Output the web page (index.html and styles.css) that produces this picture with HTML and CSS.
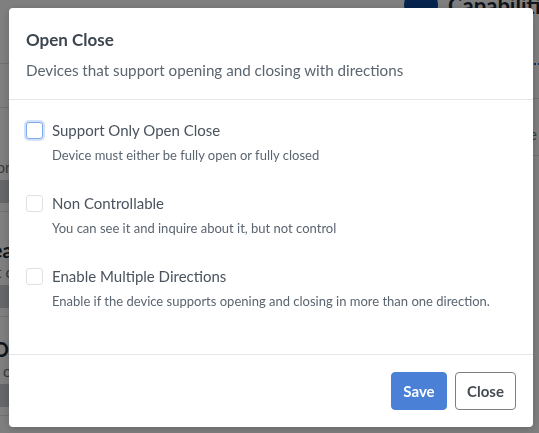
FILE: index.html
```html
<!DOCTYPE html>
<html lang="en">
<head>
<meta charset="utf-8">
<title>Open Close</title>
<link rel="stylesheet" href="styles.css">
</head>
<body>
<div class="page">
  <div class="topbar">
    <div class="avatar"></div>
    <div class="page-title">Capabilities</div>
  </div>
  <div class="columns">
    <div class="left-col">
      <div class="rule"></div>
      <div class="rule gap1"></div>
      <div class="cap first">
        <div class="cap-desc">Devices that can be set on or on</div>
        <div class="cap-bar"></div>
      </div>
      <div class="cap second">
        <div class="cap-title">Heat</div>
        <div class="cap-desc">Devices that ca</div>
        <div class="cap-bar"></div>
      </div>
      <div class="cap third">
        <div class="cap-title">Open Position On</div>
        <div class="cap-desc">Devices that can on</div>
        <div class="cap-bar"></div>
      </div>
    </div>
    <div class="right-col">
      <div class="dots"></div>
      <div class="rule r1"></div>
      <div class="r-text"><span>Close</span></div>
      <div class="rule"></div>
    </div>
  </div>
</div>

<div class="overlay">
  <div class="modal">
    <div class="modal-header">
      <h2 class="modal-title">Open Close</h2>
      <p class="modal-sub">Devices that support opening and closing with directions</p>
    </div>
    <div class="modal-body">
      <label class="option">
        <span class="box focused"></span>
        <span class="option-text">
          <span class="option-label">Support Only Open Close</span>
          <span class="option-desc">Device must either be fully open or fully closed</span>
        </span>
      </label>
      <label class="option">
        <span class="box"></span>
        <span class="option-text">
          <span class="option-label">Non Controllable</span>
          <span class="option-desc">You can see it and inquire about it, but not control</span>
        </span>
      </label>
      <label class="option">
        <span class="box"></span>
        <span class="option-text">
          <span class="option-label">Enable Multiple Directions</span>
          <span class="option-desc">Enable if the device supports opening and closing in more than one direction.</span>
        </span>
      </label>
    </div>
    <div class="modal-footer">
      <button class="btn btn-primary">Save</button>
      <button class="btn btn-outline">Close</button>
    </div>
  </div>
</div>
</body>
</html>
```
FILE: styles.css
```css
* { box-sizing: border-box; }
html, body { margin: 0; padding: 0; }
body {
  width: 539px;
  height: 433px;
  overflow: hidden;
  background: #ffffff;
  font-family: Lato, "Noto Sans", sans-serif;
  color: #3f4852;
}

/* background page */
.page { width: 539px; height: 433px; overflow: hidden; }
.topbar {
  display: flex;
  align-items: center;
  gap: 10px;
  margin-top: -12px;
  padding-left: 404px;
  height: 34px;
}
.avatar { width: 34px; height: 34px; border-radius: 50%; background: #0b4a9c; flex: none; }
.page-title { font-weight: 700; font-size: 22px; color: #1f2a36; white-space: nowrap; }
.columns { display: flex; justify-content: space-between; }
.left-col { width: 180px; margin-left: -160px; padding-top: 41px; }
.rule { height: 1px; background: #dfe3e8; }
.gap1 { margin-top: 43px; }
.cap { padding-top: 21px; border-bottom: 1px solid #dfe3e8; }
.cap.first { padding-top: 49px; }
.cap.second { padding-top: 26px; }
.cap.third { padding-top: 20px; }
.cap-title { font-weight: 700; font-size: 20px; line-height: 24px; text-align: right; color: #1f2a36; white-space: nowrap; }
.cap-desc { font-size: 15px; line-height: 20px; text-align: right; color: #6b7480; white-space: nowrap; }
.cap-bar { height: 23px; margin: 3px 0 8px; background: #c9cdd2; }
.right-col { width: 40px; margin-right: -20px; padding-top: 41px; padding-right: 22px; }
.right-col .rule { margin-right: -22px; }
.dots { height: 2px; border-top: 2px dotted #1c5db3; margin-right: -22px; }
.r1 { margin-top: 33px; }
.r-text {
  display: flex;
  justify-content: flex-end;
  font-size: 15px;
  line-height: 18px;
  color: #6b7480;
  padding: 26px 0 12px 0;
  white-space: nowrap;
}
.r-text span { flex: none; }

/* overlay + modal */
.overlay {
  position: fixed;
  inset: 0;
  background: rgba(0, 0, 0, 0.5);
}
.modal {
  position: absolute;
  left: 9px;
  top: 8px;
  width: 524px;
  background: #ffffff;
  border-radius: 4px;
  box-shadow: 0 2px 8px rgba(0,0,0,0.2);
}
.modal-header {
  padding: 20px 17px 17px;
  border-bottom: 1px solid #e3e6ea;
}
.modal-title {
  margin: 0;
  font-size: 17px;
  line-height: 24px;
  font-weight: 700;
  color: #3d4650;
}
.modal-sub {
  margin: 6px 0 0;
  font-size: 15.2px;
  line-height: 24px;
  color: #5b6570;
}
.modal-body {
  padding: 18px 17px 43px;
  display: flex;
  flex-direction: column;
  gap: 26px;
  border-bottom: 1px solid #e3e6ea;
}
.option { display: flex; align-items: flex-start; gap: 9px; }
.box {
  flex: none;
  width: 17px;
  height: 17px;
  margin-top: 4px;
  border: 1px solid #dde1e6;
  border-radius: 3px;
  background: #fff;
}
.box.focused {
  border-color: #7ea9e6;
  box-shadow: 0 0 0 2px rgba(80, 140, 230, 0.25);
}
.option-text { display: flex; flex-direction: column; }
.option-label { font-size: 15px; line-height: 24px; color: #4a535d; }
.option-desc { margin-top: 3px; font-size: 13px; line-height: 20px; color: #5b6570; white-space: nowrap; }
.modal-footer {
  display: flex;
  justify-content: flex-end;
  gap: 8px;
  padding: 17px 17px 17px;
}
.btn {
  height: 38px;
  border-radius: 4px;
  font-family: Lato, "Noto Sans", sans-serif;
  font-size: 15px;
  font-weight: 700;
  padding: 0;
  cursor: pointer;
}
.btn-primary { width: 56px; background: #4a80d6; border: 1px solid #4a80d6; color: #ffffff; }
.btn-outline { width: 61px; background: #ffffff; border: 1px solid #7c7f83; color: #454b52; }
```
